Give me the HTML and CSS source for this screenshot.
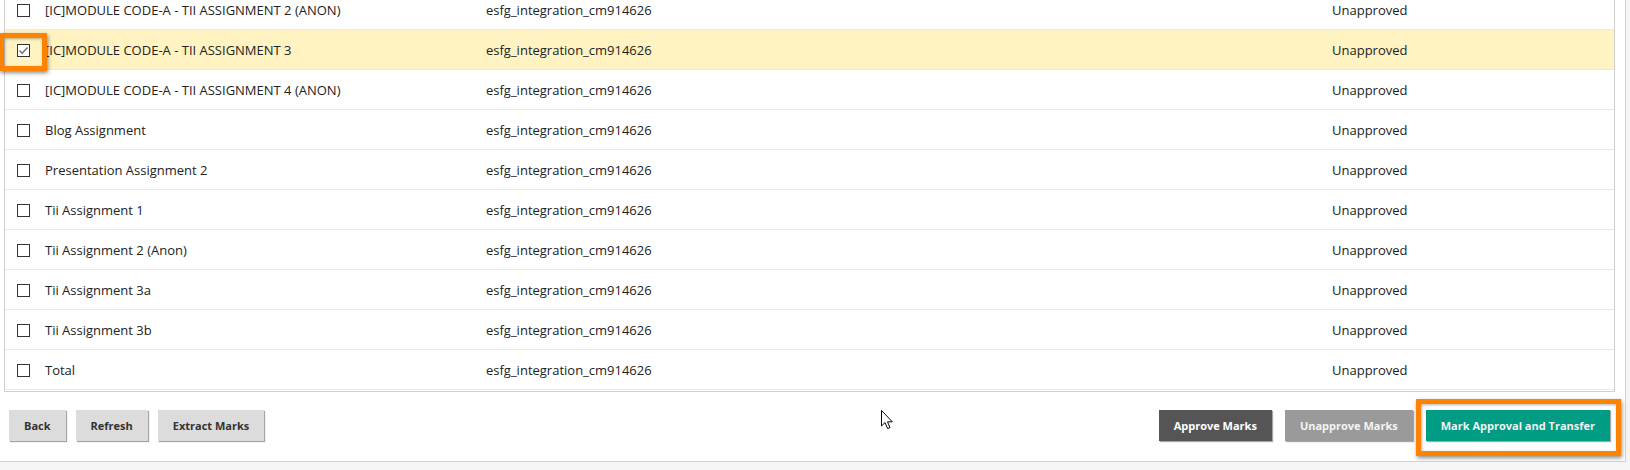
FILE: index.html
```html
<!DOCTYPE html>
<html lang="en">
<head>
  <meta charset="UTF-8">
  <title>Mark Approval</title>
  <link rel="stylesheet" href="styles.css">
</head>
<body>
  <div class="panel">
    <div class="grid-wrap">
      <table class="marks">
        <colgroup>
          <col class="c-check">
          <col class="c-name">
          <col class="c-owner">
          <col class="c-status">
        </colgroup>
        <tbody>
          <tr><td><span class="box"></span></td><td>[IC]MODULE CODE-A - TII ASSIGNMENT 2 (ANON)</td><td>esfg_integration_cm914626</td><td>Unapproved</td></tr>
          <tr class="selected"><td><span class="box checked"><svg width="11" height="11" viewBox="0 0 11 11"><path d="M1.5 5.5 L4.2 8.2 L9.5 2.5" fill="none" stroke="#6b6b6b" stroke-width="1.3"/></svg></span></td><td>[IC]MODULE CODE-A - TII ASSIGNMENT 3</td><td>esfg_integration_cm914626</td><td>Unapproved</td></tr>
          <tr><td><span class="box"></span></td><td>[IC]MODULE CODE-A - TII ASSIGNMENT 4 (ANON)</td><td>esfg_integration_cm914626</td><td>Unapproved</td></tr>
          <tr><td><span class="box"></span></td><td>Blog Assignment</td><td>esfg_integration_cm914626</td><td>Unapproved</td></tr>
          <tr><td><span class="box"></span></td><td>Presentation Assignment 2</td><td>esfg_integration_cm914626</td><td>Unapproved</td></tr>
          <tr><td><span class="box"></span></td><td>Tii Assignment 1</td><td>esfg_integration_cm914626</td><td>Unapproved</td></tr>
          <tr><td><span class="box"></span></td><td>Tii Assignment 2 (Anon)</td><td>esfg_integration_cm914626</td><td>Unapproved</td></tr>
          <tr><td><span class="box"></span></td><td>Tii Assignment 3a</td><td>esfg_integration_cm914626</td><td>Unapproved</td></tr>
          <tr><td><span class="box"></span></td><td>Tii Assignment 3b</td><td>esfg_integration_cm914626</td><td>Unapproved</td></tr>
          <tr><td><span class="box"></span></td><td>Total</td><td>esfg_integration_cm914626</td><td>Unapproved</td></tr>
        </tbody>
      </table>
    </div>
    <span class="callout callout-check"></span>

    <div class="actions">
      <div class="left">
        <button class="btn">Back</button>
        <button class="btn">Refresh</button>
        <button class="btn">Extract Marks</button>
      </div>
      <div class="right">
        <button class="btn btn-dark">Approve Marks</button>
        <button class="btn btn-muted">Unapprove Marks</button>
        <span class="transfer-wrap">
          <button class="btn btn-teal">Mark Approval and Transfer</button>
          <span class="callout callout-transfer"></span>
        </span>
      </div>
      <svg class="cursor" width="14" height="21" viewBox="0 0 14 21">
        <path d="M0.5 0.5 L0.5 16 L4 12.6 L6.6 18.6 L9 17.6 L6.5 11.8 L11.3 11.8 Z" fill="#fff" stroke="#000" stroke-width="1" stroke-linejoin="miter"/>
      </svg>
    </div>
  </div>
</body>
</html>
```

FILE: styles.css
```css
html, body {
  margin: 0;
  padding: 0;
  background: #f5f5f5;
  font-family: 'Open Sans', 'Liberation Sans', Arial, sans-serif;
  color: #222;
}

.panel {
  position: relative;
  background: #fff;
  width: 1611px;
  padding: 0 10px 20px 4px;
  border-right: 1px solid #d4d4d4;
  border-bottom: 1px solid #d4d4d4;
}

/* tabla */
.grid-wrap {
  height: 392px;
  overflow: hidden;
  border-left: 1px solid #d0d0d0;
  border-right: 1px solid #d0d0d0;
  border-bottom: 1px solid #d0d0d0;
  box-sizing: border-box;
}

.marks {
  width: 100%;
  border-collapse: collapse;
  margin-top: -10px;
  font-size: 13px;
}

.c-check { width: 40px; }
.c-name { width: 441px; }
.c-owner { width: 846px; }

.marks td {
  height: 39px;
  padding: 0;
  border-bottom: 1px solid #e9e9e9;
  vertical-align: middle;
  white-space: nowrap;
}

.marks td:first-child {
  padding-left: 12px;
}

.marks tr.selected td {
  background: #fef3c1;
}

.box {
  display: block;
  width: 11px;
  height: 11px;
  border: 1px solid #333;
  background: #fff;
  position: relative;
  top: 1px;
}

.box svg {
  display: block;
}

/* marcas naranjas */
.callout {
  position: absolute;
  border: 5px solid #ff8200;
  box-shadow: 1px 2px 4px rgba(0, 0, 0, 0.45), inset 1px 1px 3px rgba(0, 0, 0, 0.3);
  pointer-events: none;
}

.callout-check {
  left: -1px;
  top: 33px;
  width: 38px;
  height: 28px;
}

/* botones */
.actions {
  position: relative;
  display: flex;
  justify-content: space-between;
  margin-top: 18px;
  padding: 0 5px;
}

.left, .right {
  display: flex;
}

.left .btn { margin-right: 10px; }
.right .btn { margin-left: 13px; }

.btn {
  height: 31px;
  padding: 0 15px;
  border: none;
  background: #dcdcdc;
  color: #333;
  font-family: 'Open Sans', 'Liberation Sans', Arial, sans-serif;
  font-weight: bold;
  font-size: 11px;
  box-shadow: 1px 1px 1px rgba(0, 0, 0, 0.35);
  cursor: pointer;
}

.btn-dark {
  background: #555;
  color: #fff;
}

.btn-muted {
  background: #9a9a9a;
  color: #f4f4f4;
}

.btn-teal {
  background: #009c84;
  color: #f2f2f2;
}

.transfer-wrap {
  position: relative;
  display: flex;
}

.callout-transfer {
  left: 3px;
  right: -11px;
  top: -11px;
  bottom: -15px;
}

.cursor {
  position: absolute;
  left: 877px;
  top: 0;
}
```
